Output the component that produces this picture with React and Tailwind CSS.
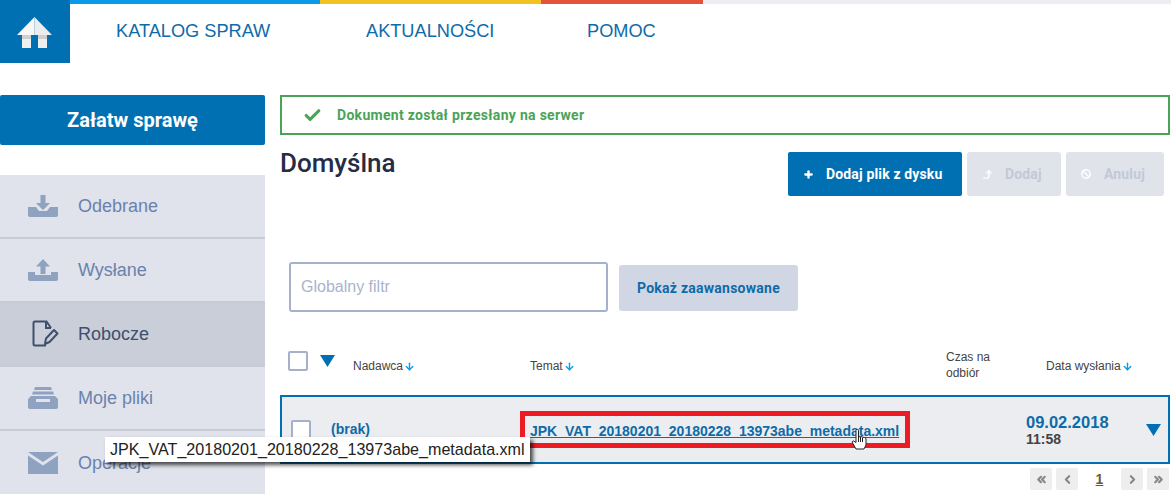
import { Plus, Ban, CornerRightUp, ChevronsLeft, ChevronLeft, ChevronRight, ChevronsRight, ArrowDown, Check } from 'lucide-react'

const arial = 'font-["Liberation_Sans",Arial,sans-serif]'
const roboto = 'font-["Roboto",sans-serif]'

function HomeIcon() {
  return (
    <svg width="36" height="32" viewBox="0 0 36 32">
      <path d="M17.500 0V18H0z" fill="#f7f7f7" />
      <path d="M17.500 0L35 18H17.500z" fill="#ececec" />
      <path d="M5 18h9v4H5zM21 18h9v4h-9z" fill="#cfcfcf" />
      <path d="M5 22h9v9H5zM21 22h9v9h-9z" fill="#efefef" />
    </svg>
  )
}

function InboxDown() {
  return (
    <svg width="30" height="22" viewBox="0 0 30 22" fill="#8fa2c0">
      <path d="M12.500 0h5v8h4.500L15 15 8 8h4.500z" />
      <path d="M0 12h8l3 4h8l3-4h8v8a2 2 0 0 1-2 2H2a2 2 0 0 1-2-2z" />
    </svg>
  )
}

function InboxUp() {
  return (
    <svg width="30" height="22" viewBox="0 0 30 22" fill="#8fa2c0">
      <path d="M15 0l7 7.500h-4.500V15h-5V7.500H8z" />
      <path d="M0 13h7v3h16v-3h7v7a2 2 0 0 1-2 2H2a2 2 0 0 1-2-2z" />
    </svg>
  )
}

function DraftIcon() {
  return (
    <svg className="ml-[3px]" width="28" height="28" viewBox="0 0 28 28" fill="none" stroke="#3f4f6d" strokeWidth="2">
      <path d="M15 25.500H4a1.500 1.500 0 0 1-1.500-1.500V3A1.500 1.500 0 0 1 4 1.500h11.500L20 8" />
      <path d="M15 1.500V8h5" />
      <path d="M14 24l1-5.500L23 10l3.500 3.500L18.500 22z" strokeLinejoin="round" />
    </svg>
  )
}

function TrayIcon() {
  return (
    <svg width="30" height="22" viewBox="0 0 30 22" fill="#8fa2c0">
      <path d="M7 0h16l1 3H6z" />
      <path d="M5 4.500h20l1 3H4z" />
      <path d="M3 9h24l3 3v8a2 2 0 0 1-2 2H2a2 2 0 0 1-2-2v-8zM8 12v3h14v-3z" fillRule="evenodd" />
    </svg>
  )
}

function MailIcon() {
  return (
    <svg width="30" height="22" viewBox="0 0 30 22" fill="#8fa2c0">
      <path d="M0 0h30L15 10z" />
      <path d="M0 3.500l15 10 15-10V22H0z" />
    </svg>
  )
}

function Triangle({ className }) {
  return (
    <svg className={className} width="15" height="12" viewBox="0 0 15 12" fill="#0170b2">
      <path d="M0 0h15L7.500 12z" />
    </svg>
  )
}

function HandCursor() {
  return (
    <svg className="absolute left-[321px] top-[11px]" width="16" height="24" viewBox="0 0 16 24" fill="#fff" stroke="#222" strokeWidth="1">
      <path d="M5 1.500a1.200 1.200 0 0 1 2.500 0V8l2-.5 2 .5 2 .5 1.500 1V16l-2 4H5L1 13l1.500-1L5 13.500z" />
      <path d="M7.500 8v5M9.500 8v5M11.500 8.500V13" fill="none" />
    </svg>
  )
}

function SideItem({ icon, label, active, last }) {
  return (
    <div
      className={`flex h-[64px] shrink-0 items-center pl-[28px] text-[18px] ${arial} ${
        active ? 'bg-[#c9ced9] text-[#3f4f6d]' : 'bg-[#e0e3ec] text-[#6a82ab]'
      } ${last ? '' : 'border-b-2 border-[#c6cbd7]'}`}
    >
      <span className="flex w-[50px] items-center">{icon}</span>
      <span>{label}</span>
    </div>
  )
}

function SortHead({ label, className }) {
  return (
    <span className={`flex items-center text-[12px] text-[#444] ${arial} ${className}`}>
      {label}
      <ArrowDown className="ml-[1px] text-[#0a9be8]" size={11} strokeWidth={3} />
    </span>
  )
}

function PageBtn({ children }) {
  return (
    <span className="flex h-[22px] w-[22px] items-center justify-center rounded-[2px] bg-[#eeeeee] text-[#888]">
      {children}
    </span>
  )
}

export default function App() {
  return (
    <div className="relative flex h-[494px] w-[1171px] flex-col overflow-hidden bg-white">
      {/* Header */}
      <div className="relative flex h-[63px] shrink-0">
        <div className="flex h-[63px] w-[70px] shrink-0 items-center justify-center bg-[#0170b2] pt-[3px]">
          <HomeIcon />
        </div>
        <div className="flex flex-1 flex-col">
          <div className="flex h-[4px] shrink-0">
            <div className="w-[250px] bg-[#0a9be8]" />
            <div className="w-[221px] bg-[#f0c322]" />
            <div className="w-[162px] bg-[#e5533d]" />
            <div className="flex-1 bg-[#eceef2]" />
          </div>
          <nav className={`flex flex-1 items-center pb-[3px] pl-[46px] text-[18.2px] text-[#0e6ba8] ${arial}`}>
            <span className="w-[250px]">KATALOG SPRAW</span>
            <span className="w-[221px]">AKTUALNOŚCI</span>
            <span>POMOC</span>
          </nav>
        </div>
      </div>

      <div className="mt-[32px] flex min-h-0 flex-1">
        {/* Sidebar */}
        <aside className="flex w-[265px] shrink-0 flex-col">
          <button className={`flex h-[50px] shrink-0 items-center justify-center rounded-[2px] bg-[#0170b2] text-[20px] font-bold text-white ${roboto}`}>
            Załatw sprawę
          </button>
          <div className="mt-[30px] flex flex-1 flex-col bg-[#e0e3ec]">
            <SideItem icon={<InboxDown />} label="Odebrane" />
            <SideItem icon={<InboxUp />} label="Wysłane" />
            <SideItem icon={<DraftIcon />} label="Robocze" active />
            <SideItem icon={<TrayIcon />} label="Moje pliki" />
            <SideItem icon={<MailIcon />} label="Operacje" last />
          </div>
        </aside>

        {/* Main */}
        <main className="ml-[15px] flex w-[890px] flex-col">
          <div className={`flex h-[40px] shrink-0 items-center border-2 border-[#4aa357] pl-[21px] text-[14px] font-bold text-[#4aa357] ${roboto}`}>
            <Check size={19} strokeWidth={4} />
            <span className="ml-[15px] tracking-[0.3px]">Dokument został przesłany na serwer</span>
          </div>

          <div className="mt-[17px] flex shrink-0 items-start justify-between pr-[6px]">
            <h1 className={`mt-[-2px] h-[32px] text-[26px] font-medium leading-[26px] text-[#252c45] ${roboto}`}>Domyślna</h1>
            <div className={`flex gap-[5px] text-[14px] font-bold tracking-[0.15px] ${roboto}`}>
              <button className="flex h-[44px] w-[174px] items-center rounded-[2px] bg-[#0170b2] pl-[15px] text-white">
                <Plus size={11} strokeWidth={5} />
                <span className="ml-[12px]">Dodaj plik z dysku</span>
              </button>
              <button className="flex h-[44px] w-[94px] items-center rounded-[3px] bg-[#e0e3ea] pl-[15px] text-[#c3c9d6]">
                <CornerRightUp className="text-white" size={11} strokeWidth={3} />
                <span className="ml-[12px]">Dodaj</span>
              </button>
              <button className="flex h-[44px] w-[98px] items-center rounded-[3px] bg-[#e0e3ea] pl-[15px] text-[#c3c9d6]">
                <Ban className="text-white" size={10} strokeWidth={3.500} />
                <span className="ml-[13px]">Anuluj</span>
              </button>
            </div>
          </div>

          <div className="ml-[9px] mt-[66px] flex shrink-0 items-center gap-[11px]">
            <div className={`flex h-[50px] w-[319px] items-center rounded-[3px] border-2 border-[#a5b1cb] pl-[10px] text-[16px] text-[#a9b4cc] ${arial}`}>
              Globalny filtr
            </div>
            <button className={`mt-[2px] h-[46px] w-[179px] rounded-[3px] bg-[#d1d6e4] text-[14px] font-bold tracking-[0.25px] text-[#0e6ba8] ${roboto}`}>
              Pokaż zaawansowane
            </button>
          </div>

          {/* Table head */}
          <div className="relative mt-[37px] flex h-[46px] shrink-0 items-start">
            <span className="ml-[8px] mt-[2px] h-[20px] w-[20px] rounded-[2px] border-2 border-[#a5b1cb]" />
            <Triangle className="ml-[12px] mt-[6px]" />
            <SortHead label="Nadawca" className="ml-[18px] mt-[8px] w-[177px]" />
            <SortHead label="Temat" className="mt-[8px] w-[416px]" />
            <span className={`w-[100px] text-[12px] leading-[16px] text-[#444] ${arial}`}>
              Czas na
              <br />
              odbiór
            </span>
            <SortHead label="Data wysłania" className="mt-[8px]" />
          </div>

          {/* Row */}
          <div className="flex h-[69px] shrink-0 items-center border-2 border-[#0170b2] bg-[#ebedf1]">
            <span className="ml-[9px] h-[20px] w-[20px] rounded-[2px] border-2 border-[#a5b1cb] bg-white" />
            <span className={`ml-[20px] w-[199px] text-[14px] font-bold text-[#0e6ba8] ${arial}`}>(brak)</span>
            <div className="relative w-[496px]">
              <span className={`text-[14px] font-bold text-[#0e6ba8] underline ${arial}`}>
                JPK_VAT_20180201_20180228_13973abe_metadata.xml
              </span>
              <div className="absolute left-[-10px] top-[-7px] h-[37px] w-[390px] border-[5px] border-[#ed1c24]" />
              <HandCursor />
            </div>
            <div className={`flex w-[120px] flex-col ${arial}`}>
              <span className="text-[16.5px] font-bold leading-[18px] text-[#0e6ba8]">09.02.2018</span>
              <span className="text-[14px] font-bold leading-[16px] text-[#444]">11:58</span>
            </div>
            <Triangle />
          </div>

          {/* Pagination */}
          <div className={`mt-[4px] flex items-center justify-end gap-[4px] pr-[1px] text-[14px] font-bold ${arial}`}>
            <PageBtn><ChevronsLeft size={13} strokeWidth={4} /></PageBtn>
            <PageBtn><ChevronLeft size={13} strokeWidth={4} /></PageBtn>
            <span className="w-[35px] text-center text-[#6b5a3c] underline">1</span>
            <PageBtn><ChevronRight size={13} strokeWidth={4} /></PageBtn>
            <PageBtn><ChevronsRight size={13} strokeWidth={4} /></PageBtn>
          </div>
        </main>
      </div>

      {/* Tooltip */}
      <div className={`absolute left-[105px] top-[437px] flex h-[25px] w-[425px] items-center whitespace-nowrap bg-white pl-[5px] text-[16.1px] text-[#222] shadow-[3px_3px_4px_rgba(0,0,0,0.7)] ${arial}`}>
        JPK_VAT_20180201_20180228_13973abe_metadata.xml
      </div>
    </div>
  )
}
